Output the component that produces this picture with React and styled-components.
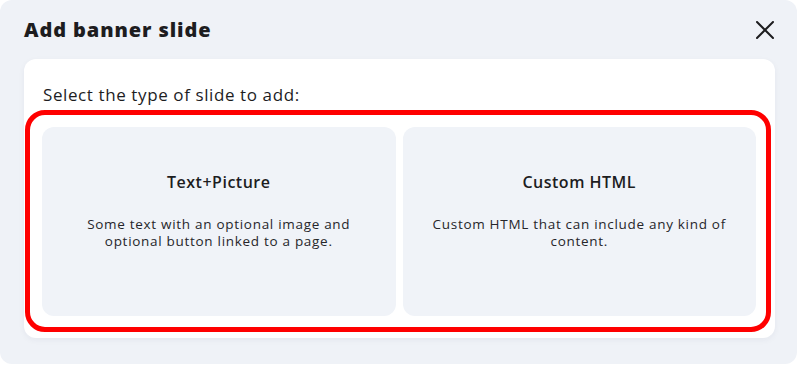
import React from 'react';
import styled, { createGlobalStyle } from 'styled-components';

const GlobalStyle = createGlobalStyle`
  html, body {
    margin: 0;
    padding: 0;
    background: #ffffff;
  }
  body {
    font-family: 'Open Sans', 'Liberation Sans', sans-serif;
    color: #1d1d1f;
  }
`;

const slideTypes = [
  {
    id: 'text-picture',
    title: 'Text+Picture',
    description: 'Some text with an optional image and optional button linked to a page.',
  },
  {
    id: 'custom-html',
    title: 'Custom HTML',
    description: 'Custom HTML that can include any kind of content.',
  },
];

const CloseIcon = () => (
  <svg width='18' height='18' viewBox='0 0 18 18' fill='none'>
    <path d='M1 1L17 17M17 1L1 17' stroke='#1d1d1f' strokeWidth='2' strokeLinecap='round' />
  </svg>
);

export default function App() {
  return (
    <>
      <GlobalStyle />
      <Dialog>
        <Header>
          <Title>Add banner slide</Title>
          <CloseButton aria-label='Close'>
            <CloseIcon />
          </CloseButton>
        </Header>
        <Body>
          <Prompt>Select the type of slide to add:</Prompt>
          <Options>
            {slideTypes.map((type) => (
              <Option key={type.id}>
                <OptionTitle>{type.title}</OptionTitle>
                <OptionText>{type.description}</OptionText>
              </Option>
            ))}
          </Options>
        </Body>
      </Dialog>
    </>
  );
}

const Dialog = styled.div`
  width: 797px;
  height: 364px;
  box-sizing: border-box;
  background: #eff2f7;
  border-radius: 12px;
  padding: 0 22px 0 24px;
  display: flex;
  flex-direction: column;
`;

const Header = styled.div`
  display: flex;
  align-items: center;
  justify-content: space-between;
  height: 59px;
`;

const Title = styled.h1`
  margin: 0;
  font-size: 20px;
  font-weight: 800;
  letter-spacing: 0.9px;
  color: #1d1d1f;
`;

const CloseButton = styled.button`
  display: flex;
  align-items: center;
  justify-content: center;
  padding: 0;
  margin-right: 1px;
  border: none;
  background: none;
  cursor: pointer;
`;

const Body = styled.div`
  background: #ffffff;
  border-radius: 12px;
  box-shadow: 0 2px 6px rgba(30, 40, 70, 0.05);
  padding: 25px 19px 22px 18px;
`;

const Prompt = styled.p`
  margin: 0 0 21px 1px;
  font-size: 17px;
  line-height: 22px;
  letter-spacing: 0.6px;
  color: #1d1d1f;
`;

const Options = styled.div`
  position: relative;
  display: grid;
  grid-template-columns: 1fr 1fr;
  gap: 7px;

  &::after {
    content: '';
    position: absolute;
    top: -17px;
    left: -17px;
    right: -15px;
    bottom: -16px;
    border: 5px solid #ff0000;
    border-radius: 20px;
    pointer-events: none;
  }
`;

const Option = styled.button`
  height: 189px;
  box-sizing: border-box;
  border: none;
  border-radius: 12px;
  background: #f0f3f8;
  padding: 45px 30px 0;
  display: flex;
  flex-direction: column;
  align-items: center;
  font-family: inherit;
  cursor: pointer;
`;

const OptionTitle = styled.div`
  font-size: 16px;
  font-weight: 600;
  line-height: 20px;
  letter-spacing: 0.5px;
  color: #1d1d1f;
`;

const OptionText = styled.div`
  margin-top: 24px;
  font-size: 13.5px;
  line-height: 17px;
  letter-spacing: 0.7px;
  color: #26262a;
  text-align: center;
`;
